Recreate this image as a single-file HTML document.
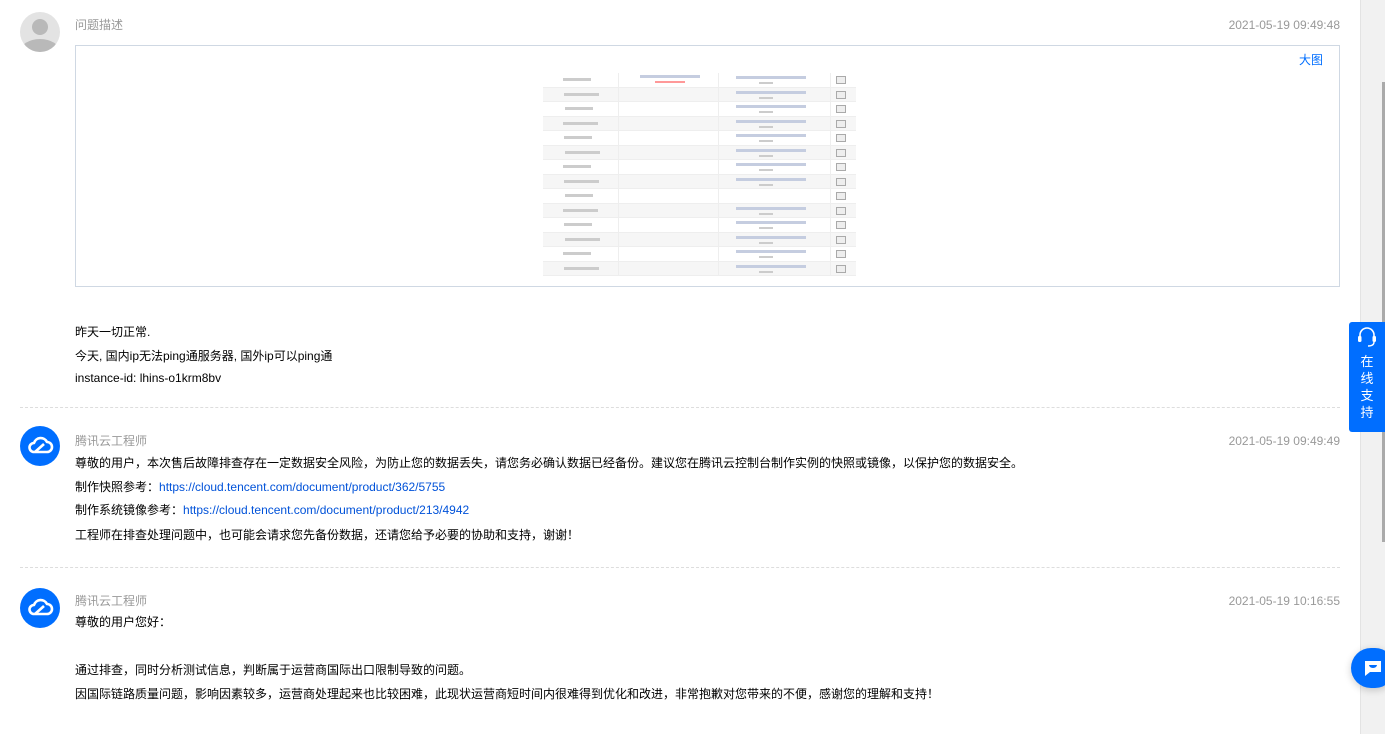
<!DOCTYPE html>
<html><head><meta charset="utf-8"><style>
*{margin:0;padding:0;box-sizing:border-box}
body{width:1385px;height:734px;overflow:hidden;background:#fff;position:relative;font-family:"Liberation Sans","Noto Sans CJK SC",sans-serif;font-size:12px;color:#000}
.a{position:absolute;line-height:16px;white-space:nowrap}
.g{color:#999}
.ts{color:#999;font-size:12px;right:45px}
a{color:#0052d9;text-decoration:none}
.av{position:absolute;left:20px;width:40px;height:40px;border-radius:50%;overflow:hidden}
.dash{position:absolute;left:20px;width:1320px;border-top:1px dashed #ddd}
.row{position:absolute;left:543px;width:313px;height:14.5px;border-bottom:1px solid #eee}
.bar{position:absolute;height:3px;background:#bbb;top:5px}
.btn{position:absolute;left:838px;top:3px;width:10px;height:8px;border:1px solid #aaa;background:#eee}
</style></head><body>
<div class="av" style="top:12px;background:#e3e3e3">
<div style="position:absolute;left:12px;top:7px;width:16px;height:16px;border-radius:50%;background:#b9b9b9"></div>
<div style="position:absolute;left:0;top:27px;width:40px;height:26px;border-radius:50%;background:#b9b9b9"></div>
</div>
<div class="a g" style="left:75px;top:17px">问题描述</div>
<div class="a ts" style="top:17px">2021-05-19 09:49:48</div>
<div style="position:absolute;left:75px;top:45px;width:1265px;height:242px;border:1px solid #cfd8e3"></div>
<div class="a" style="left:1299px;top:52px;color:#006eff">大图</div>
<div id="img"></div>
<div class="a" style="left:75px;top:324px">昨天一切正常.</div>
<div class="a" style="left:75px;top:348px">今天, 国内ip无法ping通服务器, 国外ip可以ping通</div>
<div class="a" style="left:75px;top:370px">instance-id: lhins-o1krm8bv</div>
<div class="dash" style="top:407px"></div>

<div class="av" style="top:426px;background:#006eff"><svg width="40" height="40" viewBox="0 0 40 40"><path d="M14 26h13a5 5 0 0 0 0-10 7 7 0 0 0-13 1 4.5 4.5 0 0 0 0 9z" fill="none" stroke="#fff" stroke-width="2.6" stroke-linejoin="round"/><path d="M15 26l9-8" stroke="#fff" stroke-width="2.6"/></svg></div>
<div class="a g" style="left:75px;top:433px">腾讯云工程师</div>
<div class="a ts" style="top:433px">2021-05-19 09:49:49</div>
<div class="a" style="left:75px;top:455px">尊敬的用户，本次售后故障排查存在一定数据安全风险，为防止您的数据丢失，请您务必确认数据已经备份。建议您在腾讯云控制台制作实例的快照或镜像，以保护您的数据安全。</div>
<div class="a" style="left:75px;top:479px">制作快照参考：<a>https://cloud.tencent.com/document/product/362/5755</a></div>
<div class="a" style="left:75px;top:502px">制作系统镜像参考：<a>https://cloud.tencent.com/document/product/213/4942</a></div>
<div class="a" style="left:75px;top:527px">工程师在排查处理问题中，也可能会请求您先备份数据，还请您给予必要的协助和支持，谢谢！</div>
<div class="dash" style="top:567px"></div>

<div class="av" style="top:588px;background:#006eff"><svg width="40" height="40" viewBox="0 0 40 40"><path d="M14 26h13a5 5 0 0 0 0-10 7 7 0 0 0-13 1 4.5 4.5 0 0 0 0 9z" fill="none" stroke="#fff" stroke-width="2.6" stroke-linejoin="round"/><path d="M15 26l9-8" stroke="#fff" stroke-width="2.6"/></svg></div>
<div class="a g" style="left:75px;top:593px">腾讯云工程师</div>
<div class="a ts" style="top:593px">2021-05-19 10:16:55</div>
<div class="a" style="left:75px;top:614px">尊敬的用户您好：</div>
<div class="a" style="left:75px;top:662px">通过排查，同时分析测试信息，判断属于运营商国际出口限制导致的问题。</div>
<div class="a" style="left:75px;top:686px">因国际链路质量问题，影响因素较多，运营商处理起来也比较困难，此现状运营商短时间内很难得到优化和改进，非常抱歉对您带来的不便，感谢您的理解和支持！</div>

<div style="position:absolute;left:1360px;top:0;width:25px;height:734px;background:#f1f1f1;border-left:1px solid #e3e3e3"></div>
<div style="position:absolute;left:1382px;top:82px;width:3px;height:460px;background:#aaa"></div>
<div style="position:absolute;left:1349px;top:322px;width:36px;height:110px;background:#006eff;border-radius:3px 0 0 3px;color:#fff;text-align:center">
<svg width="24" height="24" viewBox="0 0 24 24" style="margin-top:4px"><path d="M5 13V9a7 7 0 0 1 14 0v4" fill="none" stroke="#fff" stroke-width="1.6"/><rect x="3" y="10" width="3.5" height="6" rx="1.2" fill="#fff"/><rect x="17.5" y="10" width="3.5" height="6" rx="1.2" fill="#fff"/><path d="M19 16q0 4-6 4" fill="none" stroke="#fff" stroke-width="1.4"/></svg>
<div style="font-size:13px;line-height:17px">在<br>线<br>支<br>持</div></div>
<div style="position:absolute;left:1351px;top:648px;width:44px;height:40px;border-radius:20px;background:#006eff;box-shadow:0 2px 8px rgba(0,0,0,.2)">
<svg width="20" height="20" viewBox="0 0 20 20" style="position:absolute;left:12px;top:10px"><path d="M2 3h16v11H7l-5 4z" fill="#fff"/><path d="M6 7h8a4 3 0 0 1-8 0z" fill="#006eff"/></svg></div>
<script>
var h='';
for(var i=0;i<14;i++){var y=(73+i*14.5);
h+='<div class="row" style="top:'+y+'px;background:'+(i%2?'#f6f6f6':'#fff')+'">'+
'<div class="bar" style="left:'+(20+(i%3))+'px;width:'+(28+(i*7)%14)+'px;background:#ccc"></div>'+
(i!=8?'<div class="bar" style="left:193px;width:70px;top:3px;background:#c5cde0"></div><div class="bar" style="left:216px;width:14px;top:9px;background:#ccc;height:2px"></div>':'')+
'<div class="btn" style="left:293px"></div>'+
'<div style="position:absolute;left:75px;top:0;width:1px;height:100%;background:#eee"></div><div style="position:absolute;left:175px;top:0;width:1px;height:100%;background:#eee"></div><div style="position:absolute;left:287px;top:0;width:1px;height:100%;background:#eee"></div></div>';}
h+='<div class="bar" style="left:640px;top:75px;width:60px;background:#c5cde0"></div><div class="bar" style="left:655px;top:81px;width:30px;background:#f99;height:2px"></div>';
document.getElementById('img').innerHTML=h;
</script>
</body></html>
